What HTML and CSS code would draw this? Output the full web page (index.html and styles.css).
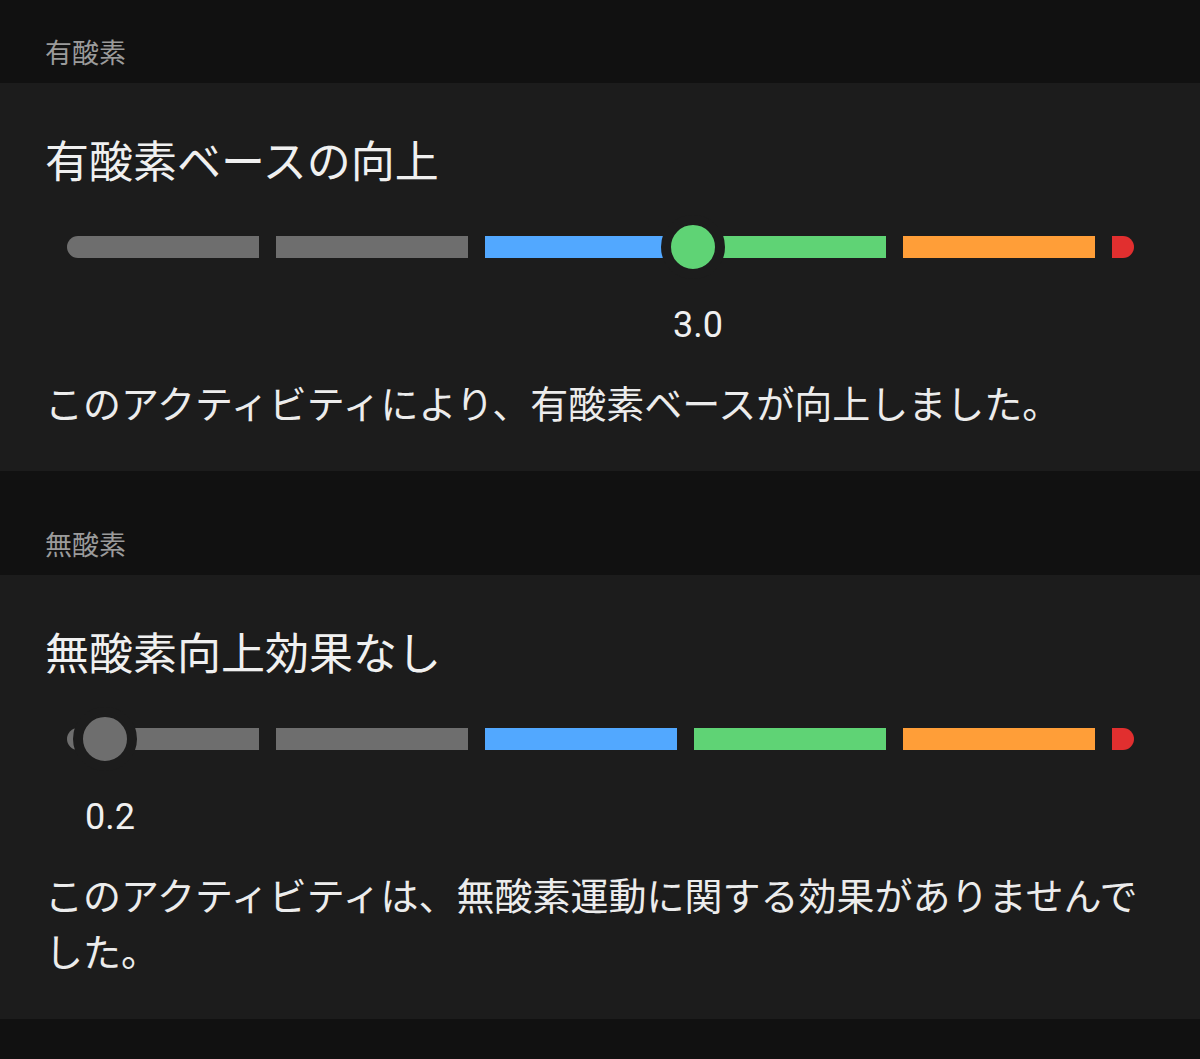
FILE: index.html
```html
<!DOCTYPE html>
<html lang="ja">
<head>
<meta charset="utf-8">
<title>トレーニング効果</title>
<link rel="stylesheet" href="styles.css">
</head>
<body>
<section class="section">
  <div class="section-label">有酸素</div>
  <div class="card">
    <h2 class="card-title">有酸素ベースの向上</h2>
    <div class="slider">
      <div class="seg seg-first seg-gray"></div>
      <div class="seg seg-gray"></div>
      <div class="seg seg-blue"></div>
      <div class="seg seg-green"></div>
      <div class="seg seg-orange"></div>
      <div class="seg seg-last seg-red"></div>
      <div class="knob knob-green" style="left:594px"></div>
    </div>
    <div class="value-row">
      <span class="value" style="left:631px">3.0</span>
    </div>
    <p class="desc">このアクティビティにより、有酸素ベースが向上しました。</p>
  </div>
</section>
<section class="section section-next">
  <div class="section-label">無酸素</div>
  <div class="card">
    <h2 class="card-title">無酸素向上効果なし</h2>
    <div class="slider">
      <div class="seg seg-first seg-gray"></div>
      <div class="seg seg-gray"></div>
      <div class="seg seg-blue"></div>
      <div class="seg seg-green"></div>
      <div class="seg seg-orange"></div>
      <div class="seg seg-last seg-red"></div>
      <div class="knob knob-gray" style="left:6px"></div>
    </div>
    <div class="value-row">
      <span class="value" style="left:43px">0.2</span>
    </div>
    <p class="desc">このアクティビティは、無酸素運動に関する効果がありませんでした。</p>
  </div>
</section>
</body>
</html>
```

FILE: styles.css
```css
html, body {
  margin: 0;
  padding: 0;
  background: #111111;
}
body {
  font-family: "Roboto", "Noto Sans CJK JP", sans-serif;
  color: #ededed;
  width: 1200px;
  min-height: 1059px;
}
.section-next {
  margin-top: 21px;
}
.section-label {
  padding: 34px 45px 9px;
  font-size: 27px;
  line-height: 40px;
  color: #9b9b9b;
}
.card {
  background: #1c1c1c;
  padding: 50px 45px 38px 45px;
}
.card-title {
  margin: 0;
  font-size: 44px;
  font-weight: 400;
  line-height: 60px;
  color: #f0f0f0;
}
.slider {
  position: relative;
  margin: 22px 0 0 22px;
  height: 64px;
  display: flex;
  align-items: center;
  gap: 17px;
}
.seg {
  width: 192px;
  height: 22px;
  flex: none;
}
.seg-first {
  border-radius: 11px 0 0 11px;
}
.seg-last {
  width: 22px;
  border-radius: 0 11px 11px 0;
}
.seg-gray { background: #6e6e6e; }
.seg-blue { background: #52a8ff; }
.seg-green { background: #5fd375; }
.seg-orange { background: #ff9e38; }
.seg-red { background: #e12f2f; }
.knob {
  position: absolute;
  top: 0;
  width: 44px;
  height: 44px;
  border: 10px solid #1c1c1c;
  border-radius: 50%;
}
.knob-green { background: #5fd375; }
.knob-gray { background: #6e6e6e; }
.value-row {
  position: relative;
  margin: 26px 0 0 22px;
  height: 40px;
}
.value {
  position: absolute;
  top: 0;
  transform: translateX(-50%);
  font-size: 36px;
  line-height: 40px;
  color: #f0f0f0;
}
.desc {
  margin: 32px 0 0;
  font-size: 38px;
  line-height: 56px;
  color: #ececec;
}
```
